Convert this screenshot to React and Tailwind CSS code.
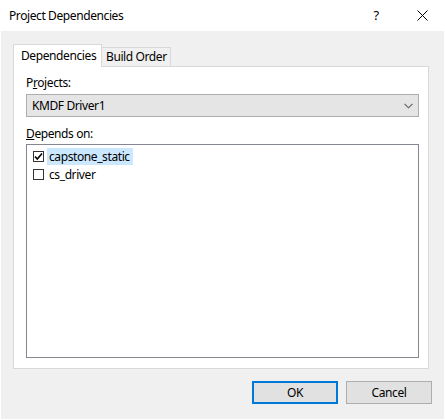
import React from "react";

function Check() {
  return (
    <svg width="9" height="9" viewBox="0 0 9 9" className="block">
      <path d="M1 4.5 L3.3 7 L8 1.5" fill="none" stroke="#000" strokeWidth="1.6" />
    </svg>
  );
}

export default function App() {
  const font = { fontFamily: '"Noto Sans", "Open Sans", sans-serif' };
  return (
    <div className="w-[445px] h-[420px] bg-white flex flex-col text-[12px] tracking-[-0.4px] text-black whitespace-nowrap" style={font}>
      {/* title bar */}
      <div className="h-[31px] flex items-center shrink-0">
        <div className="pl-[9px] flex-1 leading-none">Project Dependencies</div>
        <div className="w-[46px] text-center text-[13px] leading-none">?</div>
        <div className="w-[46px] flex justify-center">
          <svg width="11" height="11" viewBox="0 0 11 11">
            <path d="M0.5 0.5 L10.5 10.5 M10.5 0.5 L0.5 10.5" stroke="#000" strokeWidth="1" />
          </svg>
        </div>
      </div>
      {/* body */}
      <div className="flex-1 mx-px mb-px bg-[#f0f0f0] flex flex-col pl-[12px] pt-[13px]">
        {/* tabs */}
        <div className="flex items-end h-[23px] relative z-10">
          <div className="h-[23px] w-[89px] bg-white border border-b-0 border-[#d9d9d9] pl-[7px] pt-[3px] leading-[15px]">
            Dependencies
          </div>
          <div className="h-[19px] w-[69px] bg-[#f0f0f0] border border-l-0 border-b-0 border-[#d9d9d9] pl-[4px] pt-[1px] leading-[15px] mb-px">
            Build Order
          </div>
        </div>
        {/* panel */}
        <div className="-mt-px w-[416px] h-[303px] bg-white border border-[#d9d9d9] flex flex-col pl-[12px] pt-[8px]">
          <div className="leading-[15px] h-[19px]">
            P<span className="underline">r</span>ojects:
          </div>
          <div className="w-[393px] h-[23px] bg-[#e5e5e5] border border-[#adadad] flex items-center pl-[5px] pr-[5px]">
            <span className="flex-1 leading-none">KMDF Driver1</span>
            <svg width="9" height="6" viewBox="0 0 9 6">
              <path d="M0.5 0.8 L4.5 4.8 L8.5 0.8" fill="none" stroke="#606060" strokeWidth="1.1" />
            </svg>
          </div>
          <div className="leading-[15px] mt-[9px] h-[18px]">
            <span className="underline">D</span>epends on:
          </div>
          <div className="w-[393px] h-[214px] border border-[#828790] bg-white pt-[2px] pl-[6px] flex flex-col">
            <div className="h-[18px] flex items-center">
              <div className="w-[11px] h-[11px] border border-[#333] flex items-center justify-center bg-white">
                <Check />
              </div>
              <div className="ml-[3px] h-[17px] bg-[#cce8ff] pl-[2px] pr-[3px] leading-[17px]">capstone_static</div>
            </div>
            <div className="h-[18px] flex items-center">
              <div className="w-[11px] h-[11px] border border-[#333] bg-white"></div>
              <div className="ml-[3px] pl-[2px] leading-[17px]">cs_driver</div>
            </div>
          </div>
        </div>
        {/* buttons */}
        <div className="flex justify-end gap-[8px] pr-[12px] mt-[12px]">
          <button className="w-[86px] h-[23px] bg-[#e1e1e1] border-2 border-[#0078d7] leading-none">OK</button>
          <button className="w-[86px] h-[23px] bg-[#e1e1e1] border border-[#adadad] leading-none">Cancel</button>
        </div>
      </div>
    </div>
  );
}
